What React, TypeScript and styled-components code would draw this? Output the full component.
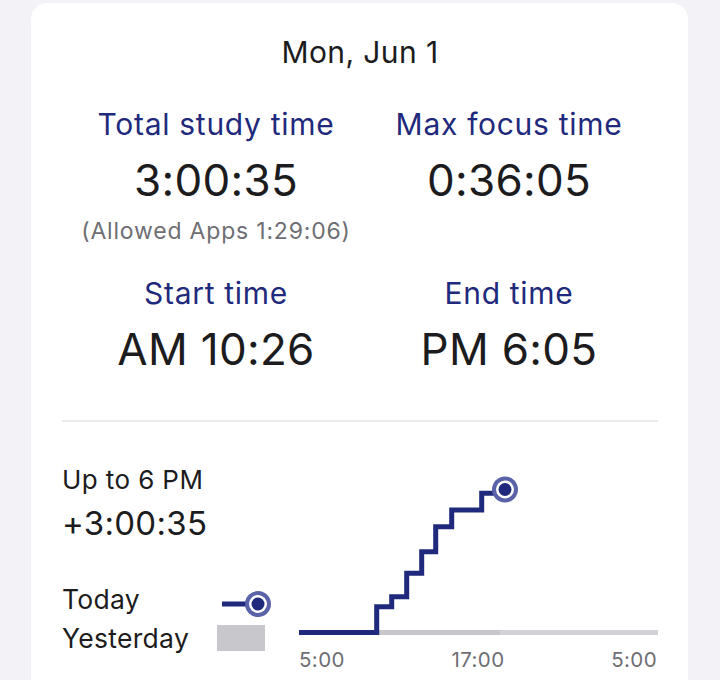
import React from "react";
import styled, { createGlobalStyle } from "styled-components";

const Global = createGlobalStyle`
  html, body { margin: 0; padding: 0; background: #f2f2f7; }
  body { font-family: Inter, "Noto Sans", sans-serif; color: #1c1c1e; }
`;

const Page = styled.div`
  padding: 3px 32px 0 31px;
  height: 680px;
  box-sizing: border-box;
  overflow: hidden;
`;

const Card = styled.div`
  background: #ffffff;
  border-radius: 16px;
  padding: 30px 30px 40px 31px;
  height: 760px;
  box-sizing: border-box;
`;

const DateTitle = styled.div`
  text-align: center;
  font-size: 30px;
  line-height: 38px;
  letter-spacing: 0.4px;
  color: #1c1c1e;
`;

const StatsGrid = styled.div`
  display: grid;
  grid-template-columns: 308px 278px;
  row-gap: 30px;
  margin-top: 35px;
  padding-bottom: 46px;
  border-bottom: 2px solid #ebebed;
`;

const Stat = styled.div`
  display: flex;
  flex-direction: column;
  align-items: center;
`;

const Label = styled.div`
  color: #1f2a7c;
  font-size: 30px;
  line-height: 36px;
  letter-spacing: 0.7px;
  white-space: nowrap;
`;

const Value = styled.div`
  font-size: 44px;
  line-height: 50px;
  margin-top: 13px;
  letter-spacing: 0.3px;
  color: #1c1c1e;
  white-space: nowrap;
`;

const Sub = styled.div`
  font-size: 23px;
  line-height: 28px;
  color: #6e6e73;
  margin-top: 12px;
  letter-spacing: 0.8px;
  white-space: nowrap;
`;

const Bottom = styled.div`
  display: flex;
  margin-top: 42px;
`;

const Side = styled.div`
  width: 239px;
  display: flex;
  flex-direction: column;
`;

const UpTo = styled.div`
  font-size: 26px;
  line-height: 32px;
  letter-spacing: 0.4px;
`;

const Delta = styled.div`
  font-size: 33px;
  line-height: 40px;
  margin-top: 7px;
  letter-spacing: 0.3px;
`;

const Legend = styled.div`
  display: grid;
  grid-template-columns: 155px 60px;
  align-items: center;
  row-gap: 7px;
  margin-top: 40px;
`;

const LegendLabel = styled.div`
  font-size: 26.5px;
  line-height: 32px;
  letter-spacing: 0.3px;
`;

const Swatch = styled.div`
  width: 48px;
  height: 26px;
  background: #c7c7cc;
`;

const ChartWrap = styled.div`
  flex: 1;
  display: flex;
  flex-direction: column;
`;

const Axis = styled.div`
  display: flex;
  justify-content: space-between;
  font-size: 20.5px;
  line-height: 24px;
  color: #6e6e73;
  margin-top: 10px;
  padding-right: 1px;
  letter-spacing: 0.4px;
`;

const NAVY = "#1f2a7c";
const RING = "#5a62a8";

const Marker = ({ x, y }: { x: number; y: number }) => (
  <g>
    <circle cx={x} cy={y} r={13} fill={RING} />
    <circle cx={x} cy={y} r={9} fill="#fff" />
    <circle cx={x} cy={y} r={6.5} fill={NAVY} />
  </g>
);

const LegendToday = () => (
  <svg width="60" height="32" viewBox="0 0 60 32" style={{ display: "block", overflow: "visible" }}>
    <line x1="5" y1="21" x2="38" y2="21" stroke={NAVY} strokeWidth="5" />
    <Marker x={41} y={21} />
  </svg>
);

const Chart = () => {
  // coordinates relative to page x=300, y=460
  const pts: [number, number][] = [
    [0, 172.5],
    [77.7, 172.5],
    [77.7, 146.7],
    [92.7, 146.7],
    [92.7, 136.7],
    [107.7, 136.7],
    [107.7, 113.3],
    [122.7, 113.3],
    [122.7, 91.7],
    [136.7, 91.7],
    [136.7, 66.7],
    [152.7, 66.7],
    [152.7, 50],
    [182.7, 50],
    [182.7, 33.3],
    [200, 33.3],
  ];
  const d = pts.map((p, i) => `${i ? "L" : "M"}${p[0]} ${p[1]}`).join(" ");
  return (
    <svg width="359" height="174" viewBox="0 4 359 174" style={{ display: "block" }}>
      <line x1="0" y1="172.5" x2="201" y2="172.5" stroke="#c7c7cc" strokeWidth="5" />
      <line x1="201" y1="172.5" x2="359" y2="172.5" stroke="#d1d1d6" strokeWidth="5" />
      <path d={d} fill="none" stroke={NAVY} strokeWidth="5" strokeLinejoin="miter" />
      <Marker x={206} y={29.5} />
    </svg>
  );
};

export default function App() {
  return (
    <>
      <Global />
      <Page>
        <Card>
          <DateTitle>Mon, Jun 1</DateTitle>
          <StatsGrid>
            <Stat>
              <Label>Total study time</Label>
              <Value>3:00:35</Value>
              <Sub>(Allowed Apps 1:29:06)</Sub>
            </Stat>
            <Stat>
              <Label>Max focus time</Label>
              <Value>0:36:05</Value>
            </Stat>
            <Stat>
              <Label>Start time</Label>
              <Value>AM 10:26</Value>
            </Stat>
            <Stat>
              <Label>End time</Label>
              <Value>PM 6:05</Value>
            </Stat>
          </StatsGrid>
          <Bottom>
            <Side>
              <UpTo>Up to 6 PM</UpTo>
              <Delta>+3:00:35</Delta>
              <Legend>
                <LegendLabel>Today</LegendLabel>
                <LegendToday />
                <LegendLabel>Yesterday</LegendLabel>
                <Swatch />
              </Legend>
            </Side>
            <ChartWrap>
              <Chart />
              <Axis>
                <span>5:00</span>
                <span>17:00</span>
                <span>5:00</span>
              </Axis>
            </ChartWrap>
          </Bottom>
        </Card>
      </Page>
    </>
  );
}
